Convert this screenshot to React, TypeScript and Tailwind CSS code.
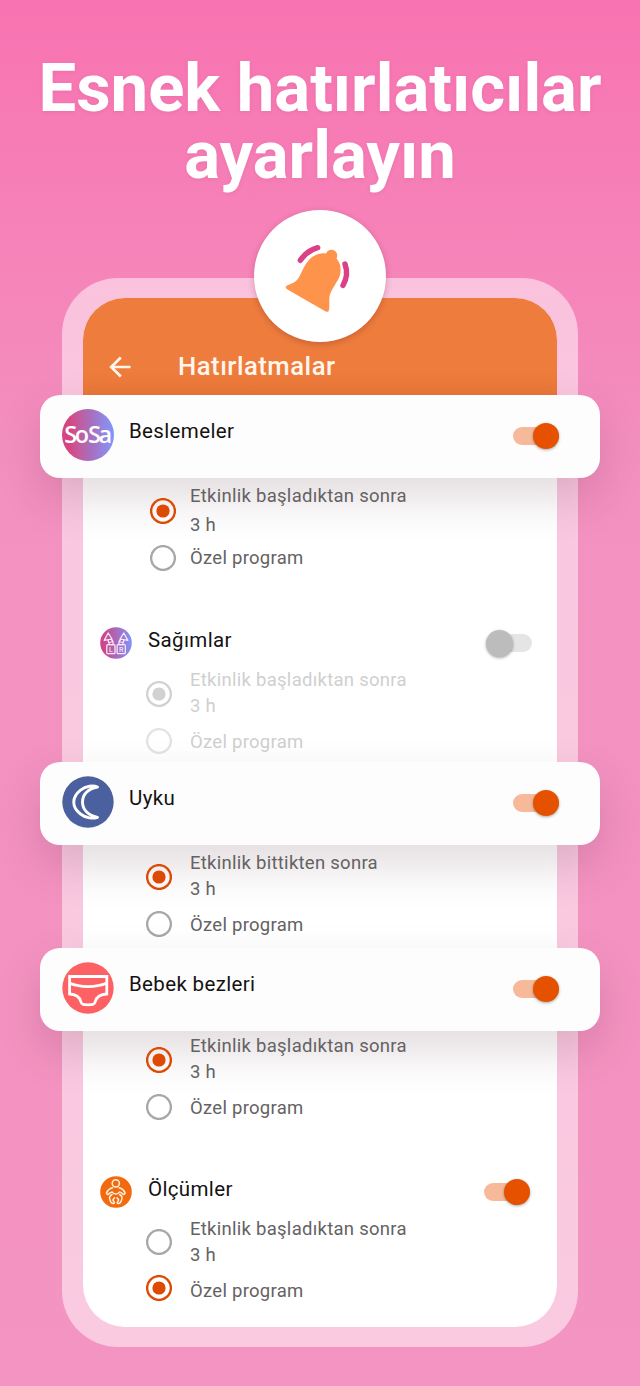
import React from 'react'
import clsx from 'clsx'

const BellIcon = () => (
  <svg viewBox="0 0 132 132" className="h-[132px] w-[132px]" fill="none">
    <path
      d="M33 75.5 C37 73.5 41 72.5 43.5 69.5 C47 65 48.5 58.5 53 52.5 C57.5 46 64.5 42.5 72 43.5 C73.5 39.5 78 38.6 81 41 C84 43.5 83.5 46.5 82.5 48.6 C86.5 53 87.6 59 85.8 65.5 C83.8 72 77.5 78.5 75.6 86 C74.8 90 75.8 95.5 75 100 C74.6 102 73.2 102.2 71.7 101.5 L33 79.3 C31.3 78.2 31.2 76.6 33 75.5 Z"
      fill="#fe944b"
    />
    <path d="M46.3 50.3 Q53 40.5 63.7 37.7" stroke="#da4187" strokeWidth="5.4" strokeLinecap="round" />
    <path d="M91 54 Q95 65 89 75.3" stroke="#da4187" strokeWidth="5.4" strokeLinecap="round" />
  </svg>
)

const ArrowIcon = () => (
  <svg viewBox="0 0 22 22" className="h-[22px] w-[22px]" fill="none" stroke="#fff6ec" strokeWidth="2.7">
    <path d="M21.5 11 H2.5 M11.8 1.5 L2.2 11 L11.8 20.5" />
  </svg>
)

const MoonIcon = () => (
  <svg viewBox="0 0 52 52" className="h-[52px] w-[52px]" fill="none">
    <circle cx="26" cy="26" r="25.7" fill="#4b609f" />
    <path
      d="M35.5 11 C31 9 24 9.8 18.5 14.2 C9.5 21.5 9.5 31 18.5 38 C24 42.3 31 43 35.5 41.3 C26 39.5 20.5 33.5 20.5 26 C20.5 18.5 26 12.6 35.5 11 Z"
      stroke="#fff"
      strokeWidth="2.9"
      strokeLinejoin="round"
    />
  </svg>
)

const DiaperIcon = () => (
  <svg viewBox="0 0 52 52" className="h-[52px] w-[52px]" fill="none">
    <circle cx="26" cy="26" r="25.7" fill="#fe6163" />
    <path
      d="M7.6 14.5 H44.8 V32 C37.5 32.4 34.5 35 33.3 39.5 C32.6 42.3 31 42.8 26 42.8 C21 42.8 19.5 42.3 18.8 39.5 C17.6 35 14.5 32.4 7.6 32 Z M7.6 21 C18 25.8 34 25.8 44.8 21"
      stroke="#fff"
      strokeWidth="2.8"
    />
  </svg>
)

const SosaIcon = () => (
  <div className="flex h-[52px] w-[52px] items-center justify-center rounded-full bg-linear-to-r from-[#d64583] from-15% via-[#a86dbd] via-55% to-[#7d97fd] pr-[2px] font-['Open_Sans',sans-serif] text-[23.5px] font-semibold text-white">
    <span className="tracking-[-2.4px] whitespace-nowrap">So</span>
    <span className="ml-[1.5px] tracking-[-2.4px] whitespace-nowrap">Sa</span>
  </div>
)

const PumpIcon = () => (
  <svg viewBox="0 0 32 32" className="h-8 w-8" fill="none">
    <defs>
      <linearGradient id="pump" x1="0" x2="1">
        <stop offset="0.1" stopColor="#cf4688" />
        <stop offset="1" stopColor="#8094f8" />
      </linearGradient>
    </defs>
    <circle cx="16" cy="16" r="15.8" fill="url(#pump)" />
    <g stroke="#fbe9fa" strokeWidth="1.25" strokeLinejoin="round">
      <path d="M4.2 13.4 L8.2 6 L12 12 Z M8 13 L8.8 15.5 M11 12 L13 14.5 L9.5 15.5 M9 15.5 V17.5 H13 V15" />
      <path d="M27.8 13.4 L23.8 6 L20 12 Z M24 13 L23.2 15.5 M21 12 L19 14.5 L22.5 15.5 M23 15.5 V17.5 H19 V15" />
      <rect x="6.8" y="17.7" width="8.2" height="9" rx="1" />
      <rect x="17.1" y="17.7" width="8.2" height="9" rx="1" />
    </g>
    <text x="9" y="25" fill="#fff" fontSize="7" fontFamily="Roboto, sans-serif">L</text>
    <text x="19" y="25" fill="#fff" fontSize="7" fontFamily="Roboto, sans-serif">R</text>
  </svg>
)

const BabyIcon = () => (
  <svg viewBox="0 0 32 32" className="h-8 w-8" fill="none">
    <circle cx="16" cy="16" r="15.8" fill="#f26a10" />
    <g stroke="#fff0dc" strokeWidth="1.5" strokeLinecap="round" strokeLinejoin="round">
      <circle cx="15.8" cy="7.3" r="3.6" />
      <path d="M12.5 11.8 C9.5 12.6 7.5 14.5 6.6 16.6 C6.3 18.4 8 19 9 17.8 C9.8 16.9 10.8 16.3 12.3 16 C12.9 17.5 14 18 15.8 18 C17.6 18 18.7 17.5 19.3 16 C20.8 16.3 21.8 16.9 22.6 17.8 C23.6 19 25.3 18.4 25 16.6 C24.1 14.5 22.1 12.6 19.1 11.8" />
      <path d="M12 18.5 C9.3 20 9 22 10.2 24.5 C11 26.8 12 27.9 13.7 27.5 C15 27 14.2 25.8 13.3 25 C12.6 23.5 13.3 22.6 14.6 21.8" />
      <path d="M19.6 18.5 C22.3 20 22.6 22 21.4 24.5 C20.6 26.8 19.6 27.9 17.9 27.5 C16.6 27 17.4 25.8 18.3 25 C19 23.5 18.3 22.6 17 21.8" />
    </g>
  </svg>
)

const Switch = ({ on = true }: { on?: boolean }) => (
  <div className={clsx('flex h-[18px] w-[46px] items-center rounded-full', on ? 'justify-end bg-[#f6ba9b]' : 'justify-start bg-[#e5e5e5]')}>
    <div
      className={clsx(
        'shrink-0 rounded-full shadow-[0_1px_3px_rgba(0,0,0,0.35)]',
        on ? 'h-[26px] w-[26px] bg-[#e65100]' : 'h-[27px] w-[27px] bg-[#bcbcbc]',
      )}
    />
  </div>
)

type RadioProps = { checked?: boolean; disabled?: boolean; className?: string }

const Radio = ({ checked, disabled, className }: RadioProps) => (
  <svg
    viewBox="0 0 26 26"
    fill="none"
    className={clsx(
      'h-[26px] w-[26px] shrink-0',
      disabled ? (checked ? 'text-[#d2d2d2]' : 'text-[#e3e3e3]') : checked ? 'text-[#dc4a04]' : 'text-[#a8a8a8]',
      className,
    )}
  >
    <circle cx="13" cy="13" r="11.9" stroke="currentColor" strokeWidth="2.4" />
    {checked && <circle cx="13" cy="13" r="6.6" fill="currentColor" />}
  </svg>
)

type OptionsProps = {
  label: string
  custom?: boolean
  disabled?: boolean
  wide?: boolean
}

const Options = ({ label, custom, disabled, wide }: OptionsProps) => (
  <div
    className={clsx(
      'flex flex-col text-[18.5px] tracking-[0.27px]',
      disabled ? 'text-[#cfcfcf]' : 'text-[#646263]',
      wide ? 'gap-[5px] pl-[67px]' : 'gap-[8px] pl-[63px]',
    )}
  >
    <div className={clsx('flex items-center', wide ? 'gap-[14px] leading-[29px]' : 'gap-[18px] leading-[26.5px]')}>
      <Radio checked={!custom} disabled={disabled} className={wide || custom ? 'mt-0' : 'mt-[2px]'} />
      <div className={wide ? 'mt-0' : 'mt-[0.5px]'}>
        <p>{label}</p>
        <p>3 h</p>
      </div>
    </div>
    <div className={clsx('flex items-center leading-[27px]', wide ? 'gap-[14px]' : 'gap-[18px]')}>
      <Radio checked={custom} disabled={disabled} className={custom ? '-mt-[6px]' : '-mt-[2px]'} />
      <p className={wide ? 'mt-0' : 'mt-[1.5px] mb-[1px]'}>Özel program</p>
    </div>
  </div>
)

const Card = ({ icon, title }: { icon: React.ReactNode; title: string }) => (
  <div className="-mx-[43px] flex h-[83px] items-center rounded-[20px] bg-[#fdfdfd] pr-[41px] pb-[3px] pl-[22px] shadow-[0_20px_45px_rgba(60,15,35,0.15)]">
    {icon}
    <h2 className="mb-[7px] ml-[15px] flex-1 text-[20.5px] tracking-[0.35px] text-[#141213]">{title}</h2>
    <div className="pt-[2px]">
      <Switch />
    </div>
  </div>
)

const SectionTitle = ({ icon, title, on }: { icon: React.ReactNode; title: string; on: boolean }) => (
  <div className={clsx('flex h-8 items-center pl-[17px]', on ? 'pr-[27px]' : 'pr-[25px]')}>
    {icon}
    <h2 className="mb-1.5 ml-4 flex-1 text-[20.5px] tracking-[0.35px] text-[#141213]">{title}</h2>
    <Switch on={on} />
  </div>
)

const App = () => {
  return (
    <main className="flex h-[1386px] w-[640px] flex-col items-center overflow-hidden bg-linear-to-b from-[#f873b1] via-[#f391c0] via-35% to-[#f494c2] font-[Roboto,sans-serif]">
      <h1 className="mt-[55px] h-[155px] text-center text-[67px] leading-[67px] font-bold whitespace-nowrap text-white [text-shadow:0_1px_4px_rgba(160,40,100,0.12)]">
        Esnek hatırlatıcılar
        <br />
        ayarlayın
      </h1>
      <div className="z-10 h-[132px] w-[132px] shrink-0 rounded-full bg-white shadow-[0_2px_6px_rgba(90,20,40,0.25)]">
        <BellIcon />
      </div>

      <div className="-mt-[64px] h-[1069px] w-[516px] shrink-0 rounded-[56px] bg-white/50 px-[21px] py-5">
        <div className="flex h-[1029px] flex-col rounded-[42px] bg-white">
          <header className="flex h-[97px] shrink-0 items-center gap-[47px] rounded-t-[42px] bg-linear-to-b from-[#ee7c3c] from-80% to-[#e87638] pt-[40px] pl-[26px]">
            <ArrowIcon />
            <span className="text-[25.7px] font-medium tracking-[0.5px] text-[#fff6ec]">Hatırlatmalar</span>
          </header>

          <Card icon={<SosaIcon />} title="Beslemeler" />
          <div className="h-[284px] pt-[4px]">
            <Options label="Etkinlik başladıktan sonra" wide />
            <div className="mt-[55px] mb-[7px]">
              <SectionTitle icon={<PumpIcon />} title="Sağımlar" on={false} />
            </div>
            <Options label="Etkinlik başladıktan sonra" disabled />
          </div>

          <Card icon={<MoonIcon />} title="Uyku" />
          <div className="h-[103px] pt-[4px]">
            <Options label="Etkinlik bittikten sonra" />
          </div>

          <Card icon={<DiaperIcon />} title="Bebek bezleri" />
          <div className="pt-[1px]">
            <Options label="Etkinlik başladıktan sonra" />
            <div className="mt-[53px] mb-[7px]">
              <SectionTitle icon={<BabyIcon />} title="Ölçümler" on />
            </div>
            <Options label="Etkinlik başladıktan sonra" custom />
          </div>
        </div>
      </div>
    </main>
  )
}

export default App
